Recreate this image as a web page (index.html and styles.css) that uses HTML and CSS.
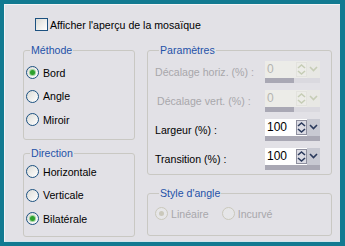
FILE: index.html
```html
<!DOCTYPE html>
<html lang="fr">
<head>
    <meta charset="UTF-8">
    <title>Mosaïque</title>
    <link rel="stylesheet" href="styles.css">
</head>
<body>
    <div class="window">
        <div class="panel">
            <!-- Preview toggle -->
            <div class="check-row"><span class="checkbox"></span>Afficher l'aperçu de la mosaïque</div>

            <div class="columns">
                <div class="col left">
                    <fieldset class="group methode">
                        <legend>Méthode</legend>
                        <div class="option"><span class="radio checked"></span>Bord</div>
                        <div class="option"><span class="radio"></span>Angle</div>
                        <div class="option"><span class="radio"></span>Miroir</div>
                    </fieldset>
                    <fieldset class="group direction">
                        <legend>Direction</legend>
                        <div class="option"><span class="radio"></span>Horizontale</div>
                        <div class="option"><span class="radio"></span>Verticale</div>
                        <div class="option"><span class="radio checked"></span>Bilatérale</div>
                    </fieldset>
                </div>

                <div class="col right">
                    <fieldset class="group params">
                        <legend>Paramètres</legend>
                        <div class="param disabled">
                            <span class="param-label">Décalage horiz. (%) :</span>
                            <div class="spin">
                                <div class="spin-box">
                                    <span class="field">0</span>
                                    <span class="arrows"><svg width="9" height="13" viewBox="0 0 9 13"><path d="M1 5 L4.5 2 L8 5" /><path d="M1 8 L4.5 11 L8 8" /></svg></span>
                                    <span class="drop"><svg width="9" height="6" viewBox="0 0 9 6"><path d="M1 1 L4.5 4.5 L8 1" /></svg></span>
                                </div>
                                <div class="bar"><div class="fill" style="width: 52%"></div></div>
                            </div>
                        </div>
                        <div class="param disabled">
                            <span class="param-label shift">Décalage vert. (%) :</span>
                            <div class="spin">
                                <div class="spin-box">
                                    <span class="field">0</span>
                                    <span class="arrows"><svg width="9" height="13" viewBox="0 0 9 13"><path d="M1 5 L4.5 2 L8 5" /><path d="M1 8 L4.5 11 L8 8" /></svg></span>
                                    <span class="drop"><svg width="9" height="6" viewBox="0 0 9 6"><path d="M1 1 L4.5 4.5 L8 1" /></svg></span>
                                </div>
                                <div class="bar"><div class="fill" style="width: 52%"></div></div>
                            </div>
                        </div>
                        <div class="param">
                            <span class="param-label">Largeur (%) :</span>
                            <div class="spin">
                                <div class="spin-box">
                                    <span class="field">100</span>
                                    <span class="arrows"><svg width="9" height="13" viewBox="0 0 9 13"><path d="M1 5 L4.5 2 L8 5" /><path d="M1 8 L4.5 11 L8 8" /></svg></span>
                                    <span class="drop"><svg width="9" height="6" viewBox="0 0 9 6"><path d="M1 1 L4.5 4.5 L8 1" /></svg></span>
                                </div>
                                <div class="bar"><div class="fill" style="width: 100%"></div></div>
                            </div>
                        </div>
                        <div class="param">
                            <span class="param-label">Transition (%) :</span>
                            <div class="spin">
                                <div class="spin-box">
                                    <span class="field">100</span>
                                    <span class="arrows"><svg width="9" height="13" viewBox="0 0 9 13"><path d="M1 5 L4.5 2 L8 5" /><path d="M1 8 L4.5 11 L8 8" /></svg></span>
                                    <span class="drop"><svg width="9" height="6" viewBox="0 0 9 6"><path d="M1 1 L4.5 4.5 L8 1" /></svg></span>
                                </div>
                                <div class="bar"><div class="fill" style="width: 100%"></div></div>
                            </div>
                        </div>
                    </fieldset>
                    <fieldset class="group style">
                        <legend>Style d'angle</legend>
                        <div class="inline-options disabled">
                            <div class="option"><span class="radio checked"></span>Linéaire</div>
                            <div class="option"><span class="radio"></span>Incurvé</div>
                        </div>
                    </fieldset>
                </div>
            </div>
        </div>
    </div>
</body>
</html>
```

FILE: styles.css
```css
body {
    margin: 0;
    font-family: "Liberation Sans", Arial, sans-serif;
    font-size: 10.6px;
    color: #000;
}
.window {
    width: 345px;
    height: 246px;
    box-sizing: border-box;
    background-color: #127a91;
    padding: 4px 5px 4px 4px;
}
.panel {
    height: 100%;
    box-sizing: border-box;
    background-color: #e2e1e6;
    border-top: 1px solid #f3f3f5;
    border-left: 1px solid #f3f3f5;
    border-bottom: 1px solid #cfe6ec;
    padding: 13px 0 0 18px;
}
.check-row {
    display: flex;
    align-items: center;
    gap: 2px;
    height: 13px;
    padding-left: 12px;
}
.checkbox {
    width: 11px;
    height: 11px;
    border: 1px solid #1c5180;
    background: linear-gradient(135deg, #dcdcd7, #ffffff);
}
.columns {
    display: flex;
    gap: 12px;
    margin-top: 13px;
}
.col {
    display: flex;
    flex-direction: column;
}
.left {
    width: 112px;
}
.right {
    width: 185px;
}
.group {
    margin: 0;
    padding: 0 0 0 2px;
    min-width: 0;
    box-sizing: border-box;
    border: 1px solid #c9c8c3;
    border-radius: 3px;
}
.group legend {
    color: #2552a8;
    line-height: 13px;
    padding: 0 1px;
    margin-left: 4px;
}
.methode {
    height: 96px;
    padding-top: 4px;
}
.direction {
    height: 90px;
    margin-top: 7px;
}
.params {
    height: 131px;
    padding-left: 7px;
}
.style {
    height: 49px;
    margin-top: 12px;
    padding-left: 7px;
    padding-top: 2px;
}
.option {
    display: flex;
    align-items: center;
    gap: 4px;
    height: 23.5px;
}
.radio {
    width: 11px;
    height: 11px;
    border: 1px solid #1c5180;
    border-radius: 50%;
    background: linear-gradient(135deg, #dcdcd7, #ffffff);
    display: flex;
    align-items: center;
    justify-content: center;
}
.radio.checked::after {
    content: "";
    width: 5px;
    height: 5px;
    border-radius: 50%;
    background-color: #2da12d;
    box-shadow: 0 0 0 1px #9fd49f;
}
.inline-options {
    display: flex;
    gap: 13px;
}
.inline-options .option {
    gap: 3px;
}
.disabled {
    color: #a8a7ab;
}
.disabled .radio {
    border-color: #cac8bb;
    background: #e6e6e8;
}
.disabled .radio.checked::after {
    background-color: #cac8bb;
    box-shadow: none;
}
.param {
    display: flex;
    align-items: center;
    height: 29px;
}
.param-label {
    width: 110px;
}
.param-label.shift {
    padding-left: 2px;
    width: 108px;
}
.spin {
    width: 55px;
    display: flex;
    flex-direction: column;
}
.spin-box {
    display: flex;
    height: 17px;
    background-color: #fff;
}
.field {
    width: 29px;
    padding-left: 2px;
    line-height: 17px;
    font-size: 12px;
}
.arrows {
    width: 11px;
    height: 15px;
    margin-top: 1px;
    box-sizing: border-box;
    border: 1px solid #8e8f9e;
    background-color: #dcdce4;
    display: flex;
    align-items: center;
    justify-content: center;
}
.arrows svg, .drop svg {
    fill: none;
    stroke: #2b3a5c;
    stroke-width: 1.6;
}
.drop {
    width: 13px;
    background-color: #c8c9d2;
    display: flex;
    align-items: center;
    justify-content: center;
}
.bar {
    height: 5px;
    background-color: #dad9df;
}
.fill {
    height: 100%;
    background-color: #a9a8b4;
}
.disabled .spin-box {
    background-color: #ecece8;
}
.disabled .field {
    color: #b4b4b0;
}
.disabled .arrows {
    border-color: #e3e3de;
    background-color: #ecece8;
}
.disabled .arrows svg, .disabled .drop svg {
    stroke: #c6cdb6;
}
.disabled .drop {
    background-color: #e8e8e4;
}
```
